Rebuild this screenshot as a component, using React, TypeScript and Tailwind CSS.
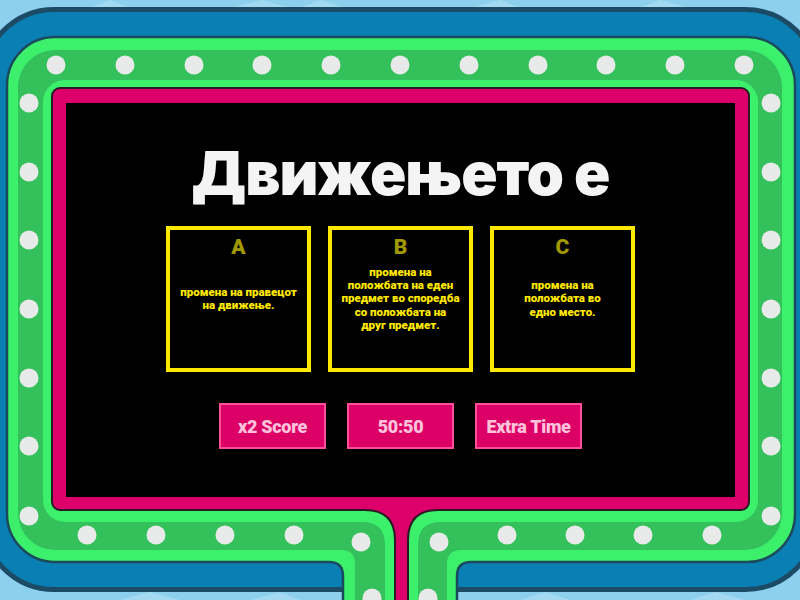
import React from "react";

const topDots = [56, 125, 194, 262, 331, 400, 469, 538, 606, 675, 744];
const sideYs = [103, 172, 240, 309, 378, 446, 516];
const bottomDots: [number, number][] = [
  [87, 535], [156, 535], [225, 535], [294, 535], [361, 542], [372, 598],
  [439, 542], [428, 598], [507, 535], [575, 535], [643, 535], [712, 535],
];

function Frame() {
  const outer =
    "M 55 37 H 747 A 48 48 0 0 1 795 85 V 514 A 48 48 0 0 1 747 562 H 471 Q 457 562 457 576 V 612 H 343 V 576 Q 343 562 329 562 H 55 A 48 48 0 0 1 7 514 V 85 A 48 48 0 0 1 55 37 Z";
  const dark =
    "M 55 50 H 745 A 37 37 0 0 1 782 87 V 513 A 37 37 0 0 1 745 550 H 461 Q 447 550 447 564 V 612 H 355 V 564 Q 355 550 341 550 H 55 A 37 37 0 0 1 18 513 V 87 A 37 37 0 0 1 55 50 Z";
  const inner =
    "M 65 80 H 736 A 22 22 0 0 1 758 102 V 500 A 22 22 0 0 1 736 522 H 441 Q 418 522 418 545 V 612 H 385 V 545 Q 385 522 362 522 H 65 A 22 22 0 0 1 43 500 V 102 A 22 22 0 0 1 65 80 Z";
  const pink =
    "M 60 88 H 741 A 8 8 0 0 1 749 96 V 502 A 8 8 0 0 1 741 510 H 438 Q 408 510 408 540 V 612 H 395 V 540 Q 395 510 365 510 H 60 A 8 8 0 0 1 52 502 V 96 A 8 8 0 0 1 60 88 Z";
  return (
    <svg
      className="pointer-events-none absolute inset-0"
      width="800"
      height="600"
      viewBox="0 0 800 600"
    >
      <rect x="0" y="0" width="800" height="600" fill="#8dd0ee" />
      <g fill="#a3daf2">
        <polygon points="90,8 110,0 130,8" />
        <polygon points="230,8 262,0 290,8" />
        <polygon points="300,8 320,0 345,8" />
        <polygon points="470,8 500,0 520,8" />
        <polygon points="640,8 660,0 690,8" />
        <polygon points="120,600 150,592 180,600" />
        <polygon points="250,600 280,592 300,600" />
        <polygon points="520,600 545,592 570,600" />
        <polygon points="690,600 715,592 745,600" />
      </g>
      <rect
        x="-17.5"
        y="9.5"
        width="835"
        height="580"
        rx="72"
        fill="#0a7fb3"
        stroke="#1c4b66"
        strokeWidth="5"
      />
      <path d={outer} fill="#3df06c" stroke="#1a4a5c" strokeWidth="2.5" />
      <path d={dark} fill="#34c05a" />
      <path d={inner} fill="#3df06c" />
      <path d={pink} fill="#dd006a" stroke="#2a1a24" strokeWidth="2" />
      <g fill="#e7eae9">
        {topDots.map((x) => (
          <circle key={"t" + x} cx={x} cy={65} r={9.5} />
        ))}
        {sideYs.map((y) => (
          <circle key={"l" + y} cx={29} cy={y} r={9.5} />
        ))}
        {sideYs.map((y) => (
          <circle key={"r" + y} cx={771} cy={y} r={9.5} />
        ))}
        {bottomDots.map(([x, y]) => (
          <circle key={"b" + x + "-" + y} cx={x} cy={y} r={9.5} />
        ))}
      </g>
    </svg>
  );
}

function Card({ letter, lines }: { letter: string; lines: string[] }) {
  return (
    <div className="grid h-[146px] w-[145px] grid-rows-[1fr_auto_1fr] border-4 border-[#ffe800] bg-black">
      <div className="flex justify-center pt-[7px]">
        <span
          className="text-[21px] font-black leading-none text-[#a09800]"
          style={{ fontFamily: "Roboto, 'Noto Sans', sans-serif" }}
        >
          {letter}
        </span>
      </div>
      <div
        className="text-center text-[11.5px] font-black leading-[13.3px] text-[#ffe800]"
        style={{ fontFamily: "Roboto, 'Noto Sans', sans-serif" }}
      >
        {lines.map((l, i) => (
          <div key={i}>{l}</div>
        ))}
      </div>
      <div />
    </div>
  );
}

function PowerButton({ label }: { label: string }) {
  return (
    <div
      className="flex h-[46px] w-[107px] items-center justify-center border-2 border-[#ff4f9a] bg-[#dc0066] text-[18px] font-black tracking-[-0.3px] text-[#ffc2db]"
      style={{ fontFamily: "Roboto, 'Noto Sans', sans-serif" }}
    >
      {label}
    </div>
  );
}

export default function App() {
  return (
    <div className="relative h-[600px] w-[800px] overflow-hidden bg-[#8dd0ee]">
      <Frame />
      <div className="relative pl-[66px] pt-[103px]">
        <div className="flex h-[394px] w-[669px] flex-col items-center bg-black">
          <div
            className="mt-[40px] h-[62px] text-[60px] font-black leading-none tracking-[-1px] text-[#f4f4f4]"
            style={{ fontFamily: "Inter, 'Noto Sans', sans-serif" }}
          >
            Движењето е
          </div>
          <div className="mt-[21px] flex gap-[17px]">
            <Card letter="A" lines={["промена на правецот", "на движење."]} />
            <Card
              letter="B"
              lines={[
                "промена на",
                "положбата на еден",
                "предмет во споредба",
                "со положбата на",
                "друг предмет.",
              ]}
            />
            <Card letter="C" lines={["промена на", "положбата во", "едно место."]} />
          </div>
          <div className="mt-[31px] flex gap-[21px]">
            <PowerButton label="x2 Score" />
            <PowerButton label="50:50" />
            <PowerButton label="Extra Time" />
          </div>
        </div>
      </div>
    </div>
  );
}
